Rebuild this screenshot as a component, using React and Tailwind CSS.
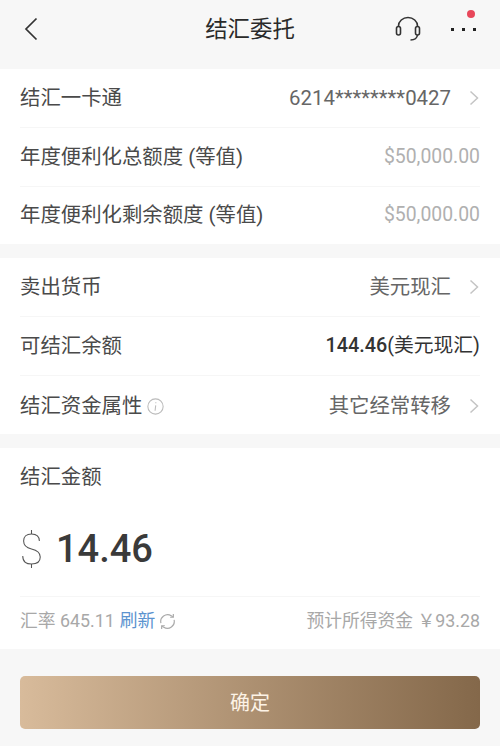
import React from 'react';

const CJK = "font-['Roboto','Noto_Sans_CJK_SC',sans-serif]";

function Chevron() {
  return (
    <svg width="11" height="16" viewBox="0 0 11 16" fill="none" className="ml-[18px] shrink-0">
      <path d="M1.5 1.5 L8.5 8 L1.5 14.5" stroke="#c4c4c4" strokeWidth="1.5" />
    </svg>
  );
}

function Row({ label, labelExtra, children, arrow, last, className = '' }) {
  return (
    <div className={`h-[59px] flex items-center justify-between ${last ? '' : 'border-b border-[#f6f6f6]'} ${className}`}>
      <div className="flex items-center text-[20.4px] text-[#4a4a4a]">
        {label}
        {labelExtra}
      </div>
      <div className="flex items-center">
        {children}
        {arrow && <Chevron />}
      </div>
    </div>
  );
}

export default function App() {
  return (
    <div className={`w-[500px] h-[746px] overflow-hidden bg-[#f7f7f7] ${CJK}`}>
      {/* header */}
      <div className="relative h-[69px] flex items-center justify-between pl-6 pr-[24px] pb-[11px]">
        <svg width="14" height="24" viewBox="0 0 14 24" fill="none">
          <path d="M12.5 1.5 L2 12 L12.5 22.5" stroke="#333" strokeWidth="1.7" />
        </svg>
        <div className="absolute left-0 right-0 top-[15px] text-center text-[22.4px] leading-[28px] text-[#2a2a2a]">结汇委托</div>
        <div className="flex items-center gap-[30px]">
          <svg width="26" height="26" viewBox="0 0 26 26" fill="none" stroke="#333" strokeWidth="1.6">
            <path d="M3.5 11 V10 A9.5 8.5 0 0 1 22.5 10 V11" />
            <rect x="1.5" y="10.5" width="4" height="8.5" rx="2" />
            <rect x="20.5" y="10.5" width="4" height="8.5" rx="2" />
            <path d="M22.5 19 C22 22.5 19.5 24 15.5 24" />
          </svg>
          <div className="relative flex gap-[7px] w-[25px] justify-between">
            <span className="w-[3px] h-[3px] bg-[#222]" />
            <span className="w-[3px] h-[3px] bg-[#222]" />
            <span className="w-[3px] h-[3px] bg-[#222]" />
            <span className="absolute right-[1px] top-[-18px] w-2 h-2 rounded-full bg-[#e8475a]" />
          </div>
        </div>
      </div>

      {/* card info */}
      <div className="bg-white px-5 h-[175px]">
        <Row label="结汇一卡通" arrow>
          <span className="text-[20.4px] text-[#666]">6214********0427</span>
        </Row>
        <Row label="年度便利化总额度 (等值)">
          <span className="text-[19.4px] text-[#b0b0b0]">$50,000.00</span>
        </Row>
        <Row label="年度便利化剩余额度 (等值)" last className="pb-[3px]">
          <span className="text-[19.4px] text-[#b0b0b0]">$50,000.00</span>
        </Row>
      </div>

      {/* currency */}
      <div className="bg-white px-5 h-[176px] mt-[14px]">
        <Row label="卖出货币" arrow className="pt-[1px]">
          <span className="text-[20.4px] text-[#666]">美元现汇</span>
        </Row>
        <Row label="可结汇余额">
          <span className="text-[19.8px] text-[#333]">
            <span className="font-medium">144.46</span>(美元现汇)
          </span>
        </Row>
        <Row
          label="结汇资金属性"
          labelExtra={
            <svg width="17" height="17" viewBox="0 0 16 16" fill="none" className="ml-[5px]">
              <circle cx="8" cy="8" r="7.2" stroke="#bbb" strokeWidth="1" />
              <path d="M8.3 4 v1 M8.2 7 L7.6 12" stroke="#bbb" strokeWidth="1" />
            </svg>
          }
          arrow
          last
          className="pt-[2px]"
        >
          <span className="text-[20.4px] text-[#666]">其它经常转移</span>
        </Row>
      </div>

      {/* amount */}
      <div className="bg-white px-5 h-[201px] mt-[14px]">
        <div className="h-[59px] flex items-center text-[20.4px] text-[#4a4a4a]">结汇金额</div>
        <div className="h-[90px] flex items-center border-b border-[#f6f6f6] pb-[6px]">
          <svg width="21" height="40" viewBox="0 0 24 40" preserveAspectRatio="none" fill="none" stroke="#555" strokeWidth="1.2" className="shrink-0 ml-[1px]">
            <path d="M21 12 C21 7 17 5 12 5 C6 5 3 8 3 12 C3 17 7 19 12 20 C17 21 22 23 22 28 C22 33 18 35 12 35 C6 35 2 33 2 27" />
            <path d="M12 1 V5 M12 35 V39" />
          </svg>
          <span className="ml-[14px] text-[38px] leading-none font-medium text-[#3a3a3a]">14.46</span>
        </div>
        <div className="h-[51px] flex items-center justify-between text-[17.8px] text-[#a8a8a8] pb-[3px]">
          <div className="flex items-center">
            <span>汇率 645.11</span>
            <span className="ml-[5px] text-[#5c93cf]">刷新</span>
            <svg width="17" height="17" viewBox="0 0 16 16" fill="none" stroke="#aaa" strokeWidth="1.1" className="ml-[4px]">
              <path d="M1.8 9.5 A6.5 6.5 0 0 1 11.5 2.5 L13 3.5" />
              <path d="M14.2 6.5 A6.5 6.5 0 0 1 4.5 13.5 L3 12.5" />
              <path d="M13.5 1 V4 H10.5" />
              <path d="M2.5 15 V12 H5.5" />
            </svg>
          </div>
          <span>预计所得资金 ￥93.28</span>
        </div>
      </div>

      {/* submit */}
      <div className="px-5 pt-[27px]">
        <button className="w-full h-[53px] rounded-[5px] bg-gradient-to-r from-[#d8bb9b] to-[#84684a] text-[20px] text-[#fdf3e6]">
          确定
        </button>
      </div>
    </div>
  );
}
